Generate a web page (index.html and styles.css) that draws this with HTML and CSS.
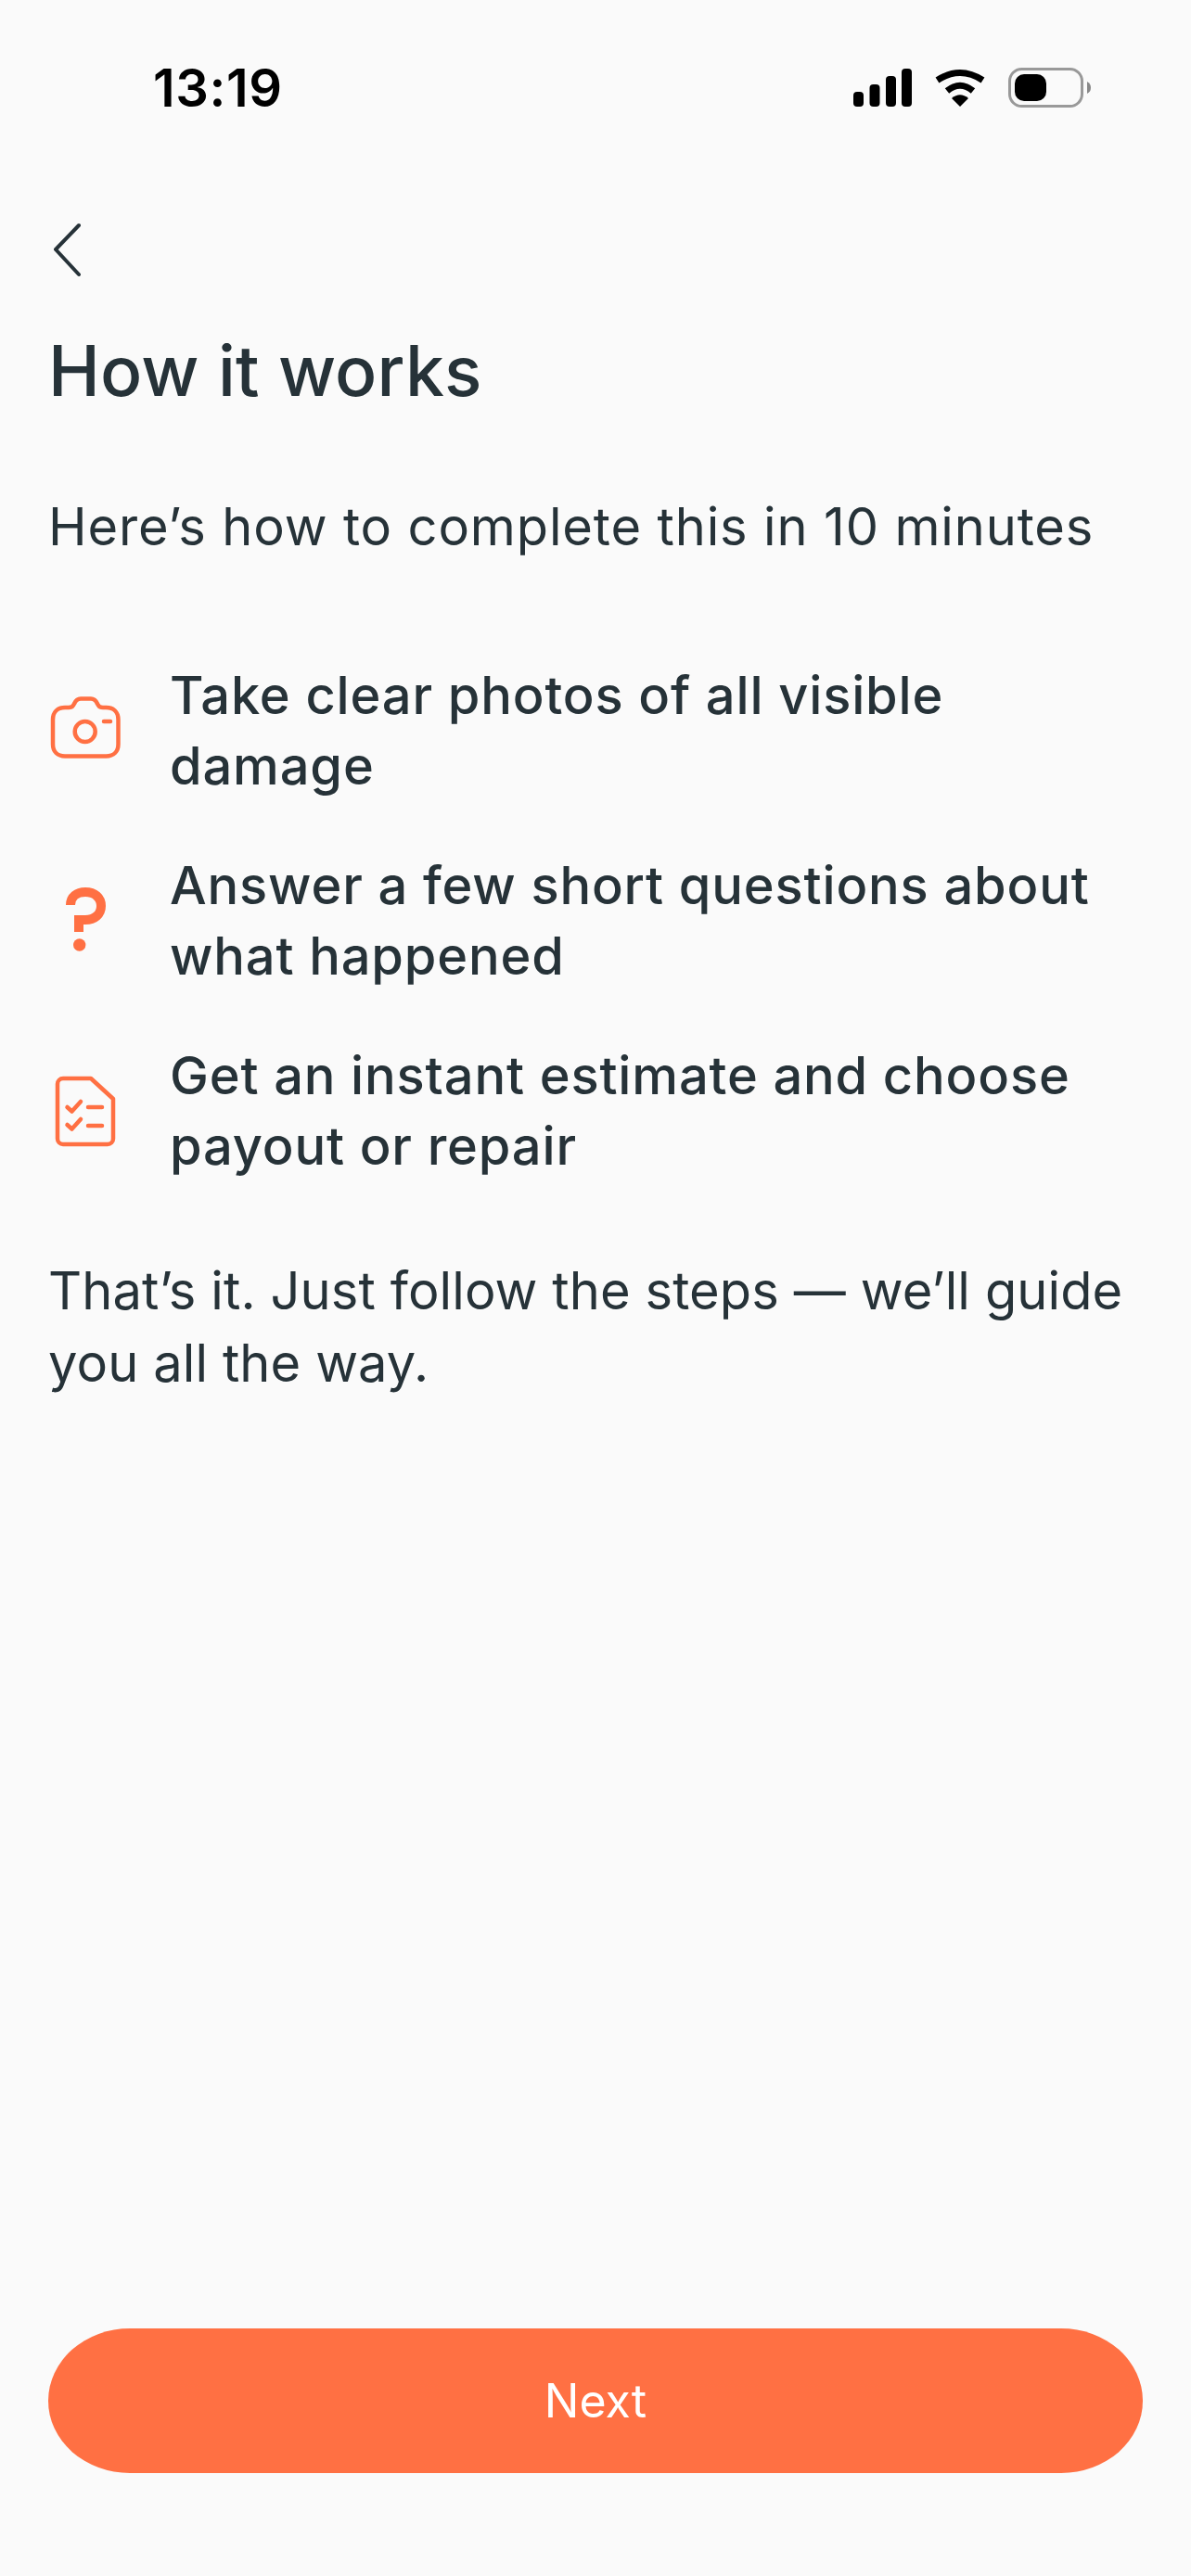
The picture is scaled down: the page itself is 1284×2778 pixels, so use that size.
FILE: index.html
```html
<!DOCTYPE html>
<html lang="en">
<head>
<meta charset="utf-8">
<title>How it works</title>
<link rel="stylesheet" href="styles.css">
</head>
<body>
<div class="screen">
  <header class="status">
    <span class="time">13:19</span>
    <div class="status-icons">
      <svg class="signal" width="63" height="42" viewBox="0 0 63 42" fill="#000"><rect x="0" y="25" width="11" height="16" rx="4"/><rect x="17.500" y="17" width="11" height="24" rx="4"/><rect x="35" y="8" width="11" height="33" rx="4"/><rect x="52" y="0" width="11" height="41" rx="4"/></svg>
      <svg class="wifi" width="56" height="42" viewBox="0 0 56 42"><path d="M28 41 19 32Q28 24.500 37 32Z" fill="#000"/><path d="M14 24Q28 12.500 42 24" fill="none" stroke="#000" stroke-width="7"/><path d="M3.500 12.500Q28-3.500 52.500 12.500" fill="none" stroke="#000" stroke-width="7"/></svg>
      <svg class="battery" width="90" height="44" viewBox="0 0 90 44"><rect x="1.500" y="1.500" width="78" height="40" rx="13" fill="none" stroke="#999" stroke-width="3"/><rect x="7" y="7" width="34" height="29" rx="10" fill="#000"/><path d="M85 15Q89 17 89 21.500 89 26 85 28Z" fill="#888"/></svg>
    </div>
  </header>
  <main class="content">
    <button class="back" type="button" aria-label="Back">
      <svg width="30" height="60" viewBox="0 0 30 60" fill="none"><path d="M27 3 2 29 27 56" stroke="#263238" stroke-width="4" stroke-linecap="round" stroke-linejoin="round"/></svg>
    </button>
    <h1 class="title">How it works</h1>
    <p class="lead">Here’s how to complete this in 10 minutes</p>
    <ul class="steps">
      <li class="step">
        <svg class="step-icon" width="80" height="80" viewBox="0 0 80 80" fill="none" stroke="#ff7043" stroke-width="4.500"><path d="M18 15h4c3 0 5-1.500 6-4 1.500-3.500 3-5.500 7-5.500h11c4 0 5.500 2 7 5.500 1 2.500 3 4 6 4h3.500c8 0 13 5 13 13v26.500c0 8-5 13-13 13H18c-8 0-13-5-13-13V28c0-8 5-13 13-13Z"/><circle cx="39.700" cy="41" r="11"/><path d="M60 30h7" stroke-linecap="round"/></svg>
        <span class="step-text">Take clear photos of all visible damage</span>
      </li>
      <li class="step">
        <svg class="step-icon" width="80" height="80" viewBox="0 0 80 80" fill="none"><path d="M24 23C24 14 31 9 40 9 50 9 57 15 57 24 57 33 50 39 40 39H33V52" stroke="#ff7043" stroke-width="10"/><circle cx="33.700" cy="66" r="6.700" fill="#ff7043"/></svg>
        <span class="step-text">Answer a few short questions about what happened</span>
      </li>
      <li class="step">
        <svg class="step-icon" width="80" height="80" viewBox="0 0 80 80" fill="none" stroke="#ff7043" stroke-width="4.500" stroke-linecap="round" stroke-linejoin="round"><path d="M16 5H46L70 27V70a6 6 0 0 1-6 6H16a6 6 0 0 1-6-6V11a6 6 0 0 1 6-6Z"/><path d="M20.500 36l5 4.500L35 30M20.500 55l5 4.500L35 49M43 36H58M43 56H58"/></svg>
        <span class="step-text">Get an instant estimate and choose payout or repair</span>
      </li>
    </ul>
    <p class="closing">That’s it. Just follow the steps — we’ll guide you all the way.</p>
    <button class="next" type="button">Next</button>
  </main>
</div>
</body>
</html>
```

FILE: styles.css
```css
* {
  box-sizing: border-box;
}

html,
body {
  margin: 0;
  padding: 0;
  background: #fafafa;
}

.screen {
  display: flex;
  flex-direction: column;
  width: 1284px;
  height: 2778px;
  font-family: Inter, "Liberation Sans", sans-serif;
  color: #263238;
  overflow: hidden;
}

.status {
  display: flex;
  align-items: center;
  justify-content: space-between;
  height: 190px;
  padding: 0 107px 0 165px;
  flex: none;
}

.time {
  font-size: 56px;
  font-weight: 600;
  color: #000;
  letter-spacing: 0.6px;
}

.status-icons {
  display: flex;
  align-items: center;
  gap: 24px;
}

.content {
  display: flex;
  flex-direction: column;
  flex: 1;
  padding: 50px 52px 111px;
}

.back {
  display: block;
  width: 40px;
  height: 60px;
  margin-left: 6px;
  padding: 0;
  border: 0;
  background: none;
  line-height: 0;
  text-align: left;
}

.title {
  margin: 60px 0 0;
  font-size: 75px;
  font-weight: 500;
  line-height: 80px;
  letter-spacing: 0.2px;
}

.lead {
  margin: 90px 0 0;
  font-size: 56px;
  font-weight: 400;
  line-height: 76px;
  letter-spacing: 0.85px;
}

.steps {
  display: flex;
  flex-direction: column;
  gap: 53px;
  margin: 106px 0 0;
  padding: 0;
  list-style: none;
}

.step {
  display: flex;
  align-items: center;
  gap: 51px;
}

.step-icon {
  flex: none;
}

.step-text {
  font-size: 56px;
  font-weight: 500;
  line-height: 76px;
  letter-spacing: 0.85px;
}

.closing {
  margin: 79px 0 0;
  font-size: 56px;
  font-weight: 400;
  line-height: 78px;
  letter-spacing: 0.1px;
}

.next {
  width: 1180px;
  height: 156px;
  margin-top: auto;
  border: 0;
  border-radius: 88px / 78px;
  background: #ff7043;
  color: #fff;
  font-family: inherit;
  font-size: 50px;
  font-weight: 400;
}
```
